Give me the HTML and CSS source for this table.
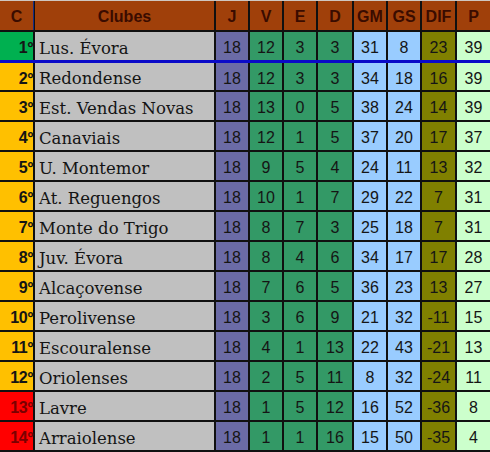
FILE: index.html
```html
<!DOCTYPE html>
<html>
<head>
<meta charset="utf-8">
<link rel="stylesheet" href="styles.css">
</head>
<body>
<div class="table">
  <div class="row head">
    <div class="c">C</div><div>Clubes</div><div>J</div><div>V</div><div>E</div><div>D</div><div>GM</div><div>GS</div><div>DIF</div><div>P</div>
  </div>
  <div class="row first">
    <div class="pos green">1º</div><div class="club">Lus. Évora</div><div class="j">18</div><div class="w">12</div><div class="w">3</div><div class="w">3</div><div class="g">31</div><div class="g">8</div><div class="dif">23</div><div class="p">39</div>
  </div>
  <div class="bar"></div>
  <div class="row second">
    <div class="pos gold">2º</div><div class="club">Redondense</div><div class="j">18</div><div class="w">12</div><div class="w">3</div><div class="w">3</div><div class="g">34</div><div class="g">18</div><div class="dif">16</div><div class="p">39</div>
  </div>
  <div class="row">
    <div class="pos gold">3º</div><div class="club">Est. Vendas Novas</div><div class="j">18</div><div class="w">13</div><div class="w">0</div><div class="w">5</div><div class="g">38</div><div class="g">24</div><div class="dif">14</div><div class="p">39</div>
  </div>
  <div class="row">
    <div class="pos gold">4º</div><div class="club">Canaviais</div><div class="j">18</div><div class="w">12</div><div class="w">1</div><div class="w">5</div><div class="g">37</div><div class="g">20</div><div class="dif">17</div><div class="p">37</div>
  </div>
  <div class="row">
    <div class="pos gold">5º</div><div class="club">U. Montemor</div><div class="j">18</div><div class="w">9</div><div class="w">5</div><div class="w">4</div><div class="g">24</div><div class="g">11</div><div class="dif">13</div><div class="p">32</div>
  </div>
  <div class="row">
    <div class="pos gold">6º</div><div class="club">At. Reguengos</div><div class="j">18</div><div class="w">10</div><div class="w">1</div><div class="w">7</div><div class="g">29</div><div class="g">22</div><div class="dif">7</div><div class="p">31</div>
  </div>
  <div class="row">
    <div class="pos gold">7º</div><div class="club">Monte do Trigo</div><div class="j">18</div><div class="w">8</div><div class="w">7</div><div class="w">3</div><div class="g">25</div><div class="g">18</div><div class="dif">7</div><div class="p">31</div>
  </div>
  <div class="row">
    <div class="pos gold">8º</div><div class="club">Juv. Évora</div><div class="j">18</div><div class="w">8</div><div class="w">4</div><div class="w">6</div><div class="g">34</div><div class="g">17</div><div class="dif">17</div><div class="p">28</div>
  </div>
  <div class="row">
    <div class="pos gold">9º</div><div class="club">Alcaçovense</div><div class="j">18</div><div class="w">7</div><div class="w">6</div><div class="w">5</div><div class="g">36</div><div class="g">23</div><div class="dif">13</div><div class="p">27</div>
  </div>
  <div class="row">
    <div class="pos gold">10º</div><div class="club">Perolivense</div><div class="j">18</div><div class="w">3</div><div class="w">6</div><div class="w">9</div><div class="g">21</div><div class="g">32</div><div class="dif">-11</div><div class="p">15</div>
  </div>
  <div class="row">
    <div class="pos gold">11º</div><div class="club">Escouralense</div><div class="j">18</div><div class="w">4</div><div class="w">1</div><div class="w">13</div><div class="g">22</div><div class="g">43</div><div class="dif">-21</div><div class="p">13</div>
  </div>
  <div class="row">
    <div class="pos gold">12º</div><div class="club">Oriolenses</div><div class="j">18</div><div class="w">2</div><div class="w">5</div><div class="w">11</div><div class="g">8</div><div class="g">32</div><div class="dif">-24</div><div class="p">11</div>
  </div>
  <div class="row">
    <div class="pos red">13º</div><div class="club">Lavre</div><div class="j">18</div><div class="w">1</div><div class="w">5</div><div class="w">12</div><div class="g">16</div><div class="g">52</div><div class="dif">-36</div><div class="p">8</div>
  </div>
  <div class="row">
    <div class="pos red">14º</div><div class="club">Arraiolense</div><div class="j">18</div><div class="w">1</div><div class="w">1</div><div class="w">16</div><div class="g">15</div><div class="g">50</div><div class="dif">-35</div><div class="p">4</div>
  </div>
</div>
</body>
</html>
```

FILE: styles.css
```css
* { box-sizing: border-box; }
html, body { margin: 0; padding: 0; background: #ffffff; }
.table {
  width: 490px;
  height: 452px;
  background: #101010;
  display: flex;
  flex-direction: column;
  gap: 2px;
  overflow: hidden;
  border-top: 1px solid #cfc6c0;
}
.row {
  display: grid;
  grid-template-columns: 33px 179px 32px 32px 32px 34px 32px 32px 33px 33px;
  column-gap: 2px;
  height: 28px;
  flex: none;
  font-family: "Liberation Sans", Arial, sans-serif;
  font-size: 16px;
  color: #151515;
}
.row > div {
  display: flex;
  align-items: center;
  justify-content: center;
  padding-top: 4px;
}
.head { height: 29px; }
.head > div {
  background: #a0400a;
  color: #3a0c00;
  font-weight: bold;
  font-size: 16px;
  padding-top: 3px;
}
.head > .c { box-shadow: 1px 0 0 #1a2a80; }
.bar { height: 3px; flex: none; background: #0a0ac8; margin: -2px 0; }
.second { height: 27px; }
.pos {
  justify-content: flex-end !important;
  padding-right: 0;
  font-weight: bold;
  font-size: 16px;
  letter-spacing: -0.3px;
}
.green { background: #00b050; }
.gold { background: #ffc000; }
.red { background: #ff0000; color: #7a0000; }
.club {
  background: #c0c0c0;
  justify-content: flex-start !important;
  padding-left: 4px;
  font-family: "DejaVu Serif", serif;
  font-size: 16.5px;
  color: #141414;
}
.j { background: #6b6ba6; }
.w { background: #339966; }
.g { background: #99ccff; }
.dif { background: #808000; }
.p { background: #ccffcc; }
```
